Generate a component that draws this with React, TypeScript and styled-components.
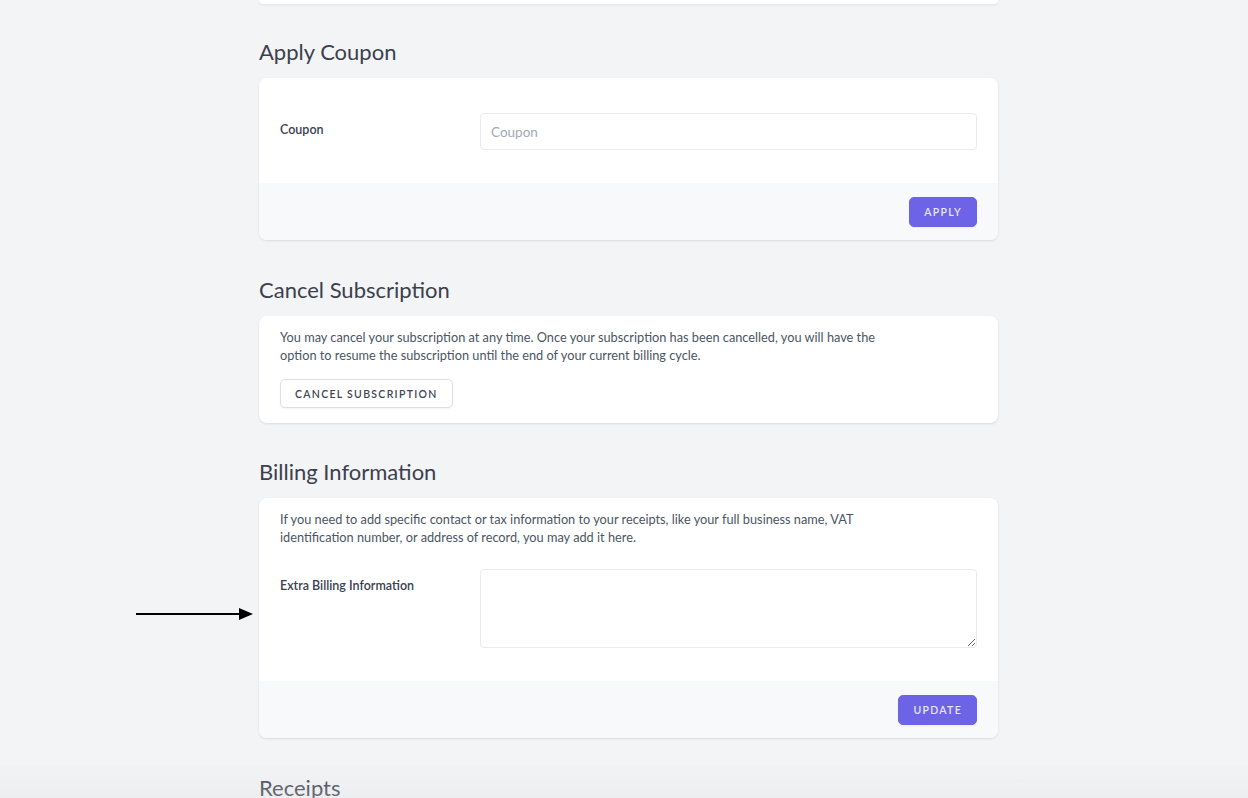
import React from 'react';
import styled, { createGlobalStyle } from 'styled-components';

const GlobalStyle = createGlobalStyle`
  html, body {
    margin: 0;
    padding: 0;
    background-color: #f3f4f6;
    font-family: Lato, "Open Sans", "Liberation Sans", sans-serif;
    -webkit-font-smoothing: antialiased;
  }
  * {
    box-sizing: border-box;
  }
`;

const Page = styled.div`
  width: 739px;
  margin-left: 259px;
  padding-bottom: 40px;
`;

const ClippedCard = styled.div`
  height: 4px;
  background-color: #ffffff;
  border-radius: 0 0 8px 8px;
  box-shadow: 0 1px 3px rgba(0, 0, 0, 0.08);
`;

const Section = styled.section<{ $mt?: number }>`
  margin-top: ${p => p.$mt ?? 36}px;
`;

const SectionTitle = styled.h2`
  margin: 0 0 12px 0;
  font-size: 22px;
  line-height: 28px;
  font-weight: 400;
  color: #3b404c;
`;

const Card = styled.div`
  position: relative;
  background-color: #ffffff;
  border-radius: 8px;
  box-shadow: 0 1px 3px rgba(0, 0, 0, 0.07), 0 1px 2px rgba(0, 0, 0, 0.04);
`;

const CardBody = styled.div<{ $pt: number; $pb: number }>`
  padding: ${p => p.$pt}px 21px ${p => p.$pb}px 21px;
`;

const CardFooter = styled.div`
  display: flex;
  justify-content: flex-end;
  align-items: center;
  height: 57px;
  padding: 0 21px;
  background-color: #f8f9fa;
  border-radius: 0 0 8px 8px;
`;

const Text = styled.p`
  margin: 0;
  max-width: 625px;
  font-size: 12.75px;
  line-height: 17.5px;
  color: #4b5563;
`;

const FieldRow = styled.div<{ $mt?: number }>`
  display: grid;
  grid-template-columns: 200px 1fr;
  align-items: start;
  margin-top: ${p => p.$mt ?? 0}px;
`;

const Label = styled.label`
  padding-top: 8px;
  font-size: 12.5px;
  line-height: 17px;
  font-weight: 600;
  color: #374151;
`;

const Input = styled.input`
  width: 100%;
  height: 37px;
  padding: 0 10px;
  font-family: inherit;
  font-size: 13.5px;
  color: #374151;
  background-color: #ffffff;
  border: 1px solid #e8eaee;
  border-radius: 4px;
  outline: none;

  &::placeholder {
    color: #a2a8b3;
  }
`;

const TextArea = styled.textarea`
  display: block;
  width: 100%;
  height: 79px;
  padding: 8px 10px;
  font-family: inherit;
  font-size: 13px;
  background-color: #ffffff;
  border: 1px solid #e8eaee;
  border-radius: 4px;
  outline: none;
  resize: vertical;
`;

const Button = styled.button<{ $variant?: 'primary' | 'secondary' }>`
  display: inline-flex;
  align-items: center;
  justify-content: center;
  height: ${p => (p.$variant === 'secondary' ? 29 : 30)}px;
  padding: 0 14px;
  font-family: inherit;
  font-size: 10.5px;
  font-weight: 600;
  letter-spacing: 1.3px;
  text-transform: uppercase;
  border-radius: 5px;
  cursor: pointer;
  color: ${p => (p.$variant === 'secondary' ? '#3f4552' : '#e8e6ff')};
  background-color: ${p => (p.$variant === 'secondary' ? '#ffffff' : '#6d63e6')};
  border: 1px solid ${p => (p.$variant === 'secondary' ? '#dcdfe4' : '#6d63e6')};
  box-shadow: 0 1px 2px rgba(0, 0, 0, 0.05);
`;

const ButtonSpacer = styled.div`
  margin-top: 15px;
`;

const Arrow = styled.svg`
  position: absolute;
  left: -123px;
  top: 109px;
  width: 117px;
  height: 14px;
`;

const BottomShade = styled.div`
  position: fixed;
  left: 0;
  right: 0;
  bottom: 0;
  height: 36px;
  pointer-events: none;
  background: linear-gradient(to bottom, rgba(225, 225, 228, 0), rgba(225, 225, 228, 0.3));
`;

const App: React.FC = () => {
  return (
    <>
      <GlobalStyle />
      <Page>
        <ClippedCard />

        <Section $mt={34}>
          <SectionTitle>Apply Coupon</SectionTitle>
          <Card>
            <CardBody $pt={35} $pb={33}>
              <FieldRow>
                <Label htmlFor="coupon">Coupon</Label>
                <Input id="coupon" type="text" placeholder="Coupon" />
              </FieldRow>
            </CardBody>
            <CardFooter>
              <Button $variant="primary">Apply</Button>
            </CardFooter>
          </Card>
        </Section>

        <Section>
          <SectionTitle>Cancel Subscription</SectionTitle>
          <Card>
            <CardBody $pt={13} $pb={15}>
              <Text>
                You may cancel your subscription at any time. Once your subscription has been cancelled, you will
                have the option to resume the subscription until the end of your current billing cycle.
              </Text>
              <ButtonSpacer>
                <Button $variant="secondary">Cancel Subscription</Button>
              </ButtonSpacer>
            </CardBody>
          </Card>
        </Section>

        <Section $mt={35}>
          <SectionTitle>Billing Information</SectionTitle>
          <Card>
            <Arrow viewBox="0 0 117 14">
              <line x1="0" y1="7" x2="104" y2="7" stroke="#000" strokeWidth="2" />
              <polygon points="103,1 117,7 103,13" fill="#000" />
            </Arrow>
            <CardBody $pt={13} $pb={33}>
              <Text>
                If you need to add specific contact or tax information to your receipts, like your full business
                name, VAT identification number, or address of record, you may add it here.
              </Text>
              <FieldRow $mt={23}>
                <Label htmlFor="extra">Extra Billing Information</Label>
                <TextArea id="extra" />
              </FieldRow>
            </CardBody>
            <CardFooter>
              <Button $variant="primary">Update</Button>
            </CardFooter>
          </Card>
        </Section>

        <Section>
          <SectionTitle>Receipts</SectionTitle>
        </Section>
      </Page>
      <BottomShade />
    </>
  );
};

export default App;
